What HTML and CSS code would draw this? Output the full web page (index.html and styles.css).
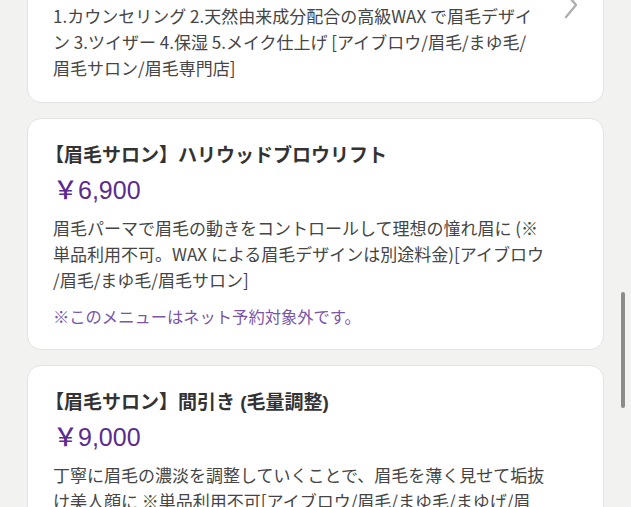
FILE: index.html
```html
<!DOCTYPE html>
<html lang="ja">
<head>
<meta charset="utf-8">
<link rel="stylesheet" href="styles.css">
</head>
<body>
<div class="list">
  <div class="card card-first">
    <p class="desc">1.カウンセリング 2.天然由来成分配合の高級WAX で眉毛デザイ<br>ン 3.ツイザー 4.保湿 5.メイク仕上げ [アイブロウ/眉毛/まゆ毛/<br>眉毛サロン/眉毛専門店]</p>
    <svg class="chevron" width="16" height="30" viewBox="0 0 16 30"><path d="M3 2 L13 14 L3 26" fill="none" stroke="#b0b0b0" stroke-width="2.4" stroke-linecap="round" stroke-linejoin="round"/></svg>
  </div>
  <div class="card">
    <h2 class="title">【眉毛サロン】ハリウッドブロウリフト</h2>
    <div class="price">￥6,900</div>
    <p class="desc">眉毛パーマで眉毛の動きをコントロールして理想の憧れ眉に (※<br>単品利用不可。WAX による眉毛デザインは別途料金)[アイブロウ<br>/眉毛/まゆ毛/眉毛サロン]</p>
    <p class="note">※このメニューはネット予約対象外です。</p>
  </div>
  <div class="card">
    <h2 class="title">【眉毛サロン】間引き (毛量調整)</h2>
    <div class="price">￥9,000</div>
    <p class="desc">丁寧に眉毛の濃淡を調整していくことで、眉毛を薄く見せて垢抜<br>け美人顔に ※単品利用不可[アイブロウ/眉毛/まゆ毛/まゆげ/眉<br>毛サロン/眉毛専門店]</p>
  </div>
</div>
<div class="scrollbar"></div>
</body>
</html>
```
FILE: styles.css
```css
html, body {
  margin: 0;
  padding: 0;
  background: #f2f2f1;
  height: 100%;
  overflow: hidden;
}
body {
  font-family: "Liberation Sans", "Noto Sans CJK JP", sans-serif;
  color: #3b3b3b;
  position: relative;
}
.list {
  display: flex;
  flex-direction: column;
  gap: 15px;
  padding: 0 27px;
  margin-top: -40px;
}
.card {
  position: relative;
  background: #fff;
  border: 1px solid #e3e3e3;
  border-radius: 14px;
  padding: 24px 40px 21px 25px;
}
.card-first {
  padding-top: 42px;
}
.chevron {
  position: absolute;
  right: 24px;
  top: 30px;
}
.title {
  margin: 0 0 0 -8px;
  font-size: 19px;
  line-height: 26px;
  font-weight: bold;
  color: #333;
  white-space: nowrap;
}
.price {
  margin-top: 6px;
  font-size: 25px;
  line-height: 30px;
  color: #5c2b90;
  font-weight: 500;
}
.desc {
  margin: 10px 0 0;
  font-size: 17px;
  line-height: 26px;
  font-family: "Noto Sans CJK JP", sans-serif;
  color: #454545;
  white-space: nowrap;
}
.card-first .desc {
  margin-top: 0;
}
.note {
  margin: 11px 0 0;
  font-size: 16.3px;
  line-height: 24px;
  color: #7a55a8;
  font-family: "Noto Sans CJK JP", sans-serif;
}
.scrollbar {
  position: absolute;
  right: 6px;
  top: 292px;
  width: 4px;
  height: 116px;
  border-radius: 2px;
  background: #8c8c8c;
}
```
